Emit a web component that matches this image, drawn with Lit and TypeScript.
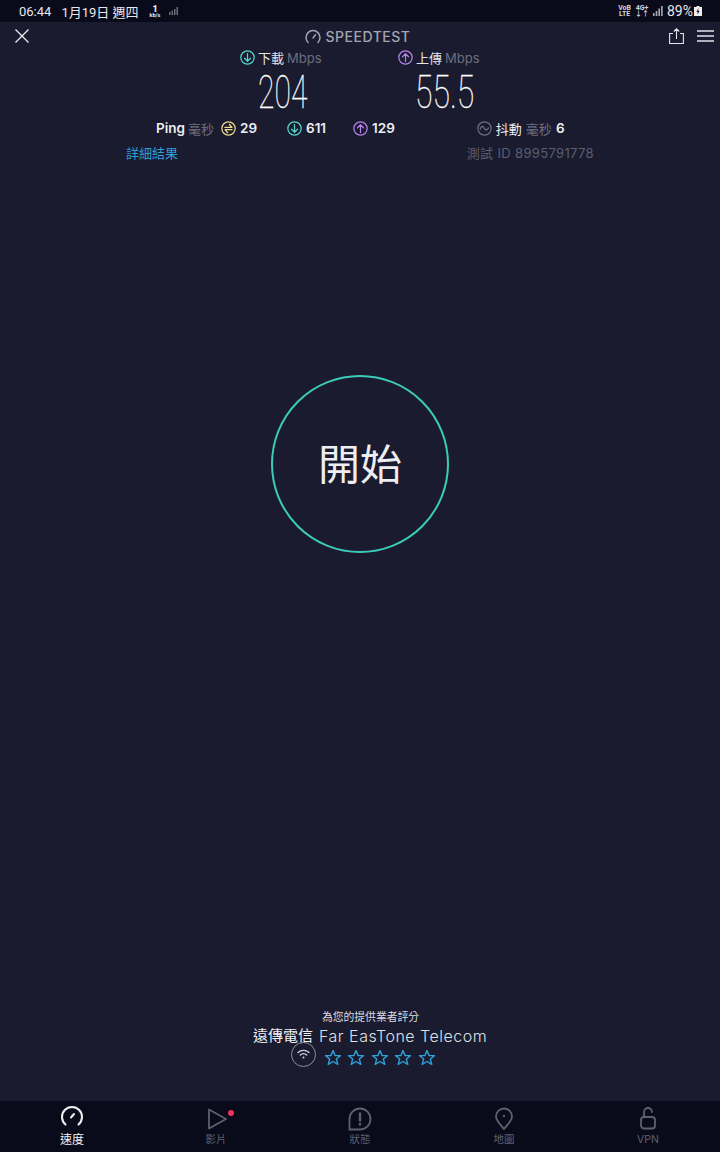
import { LitElement, html, css, svg } from "lit";
import { customElement } from "lit/decorators.js";

const circ = (color: string, inner: unknown, size = 15) => html`<svg class="ci" width=${size} height=${size} viewBox="0 0 16 16" fill="none" stroke=${color} stroke-width="1.3" stroke-linecap="round" stroke-linejoin="round"><circle cx="8" cy="8" r="7.1"/>${inner}</svg>`;
const down = svg`<path d="M8 3.8V12M4.8 8.800 8 12l3.200-3.200"/>`;
const up = svg`<path d="M8 12.200V4M4.800 7.200 8 4l3.200 3.200"/>`;
const ping = svg`<path stroke-width="1.500" d="M4.200 6.800h7.400L9 3.600M11.800 9.200H4.400L7 12.400"/>`;
const wave = svg`<path d="M3.400 8.600c1-2.800 2.600-3.400 3.600-2s2 3.600 3 3 1.600-1.200 2.400-2.200"/>`;

const star = html`<svg width="18" height="18" viewBox="0 0 18 18" fill="none" stroke="#2f9fd8" stroke-width="1.4" stroke-linejoin="round"><path d="M9 1.600l2.200 5h5.300l-4.200 3.400 1.500 5.400L9 12.500l-4.800 2.900 1.500-5.400L1.500 6.600h5.300z"/></svg>`;

@customElement("app-root")
export class AppRoot extends LitElement {
  static styles = css`
    :host { display: flex; flex-direction: column; width: 720px; height: 1152px; overflow: hidden; background: #1a1b2f; color: #fff; font-family: "Inter", "Noto Sans CJK TC", sans-serif; }
    .status { height: 22px; flex: none; background: #0a0b1a; display: flex; align-items: center; padding: 0 18px 0 19px; font-family: "Roboto", "Noto Sans CJK TC", sans-serif; font-size: 13px; color: #e8e8ec; }
    .date { margin-left: 10px; }
    .kb { margin-left: 11px; display: flex; flex-direction: column; align-items: center; font-size: 5.5px; line-height: 5px; font-weight: 700; }
    .kb b { font-size: 9px; line-height: 8px; }
    .sig { margin-left: 9px; }
    .grow { flex: 1; }
    .net { font-size: 7px; line-height: 6.5px; font-weight: 700; text-align: center; color: #d5d5da; margin-right: 4px; }
    .pct { font-size: 14px; margin: 0 1px 0 4px; }
    .head { height: 28px; flex: none; display: grid; grid-template-columns: 1fr auto 1fr; align-items: center; padding: 0 6px 0 15px; }
    .title { display: flex; align-items: center; gap: 5px; font-size: 14px; letter-spacing: 0.5px; color: #a4a5b0; font-weight: 500; padding-right: 14px; }
    .acts { justify-self: end; display: flex; align-items: center; gap: 13px; }
    .x { justify-self: start; display: block; }
    .metrics { display: flex; padding-left: 240px; height: 68px; flex: none; margin-top: -1px; }
    .metric { width: 158px; }
    .mh { display: flex; align-items: center; gap: 3px; height: 17px; font-size: 13px; color: #e4e4ea; }
    .dim { color: #6d6e80; }
    .num { font-family: "Roboto", sans-serif; font-weight: 100; font-size: 47px; line-height: 44px; height: 44px; margin-top: 4px; color: #fff; transform: scaleX(0.64); transform-origin: 0 50%; margin-left: 18px; white-space: nowrap; -webkit-text-stroke: 0.3px #fff; }
    .m2 .num { margin-left: 17px; transform: scaleX(0.68); }
    .row { display: flex; align-items: center; height: 20px; flex: none; font-size: 13.5px; font-weight: 600; color: #eeeef2; margin-top: 1px; }
    .row .ci { display: block; }
    .cell { display: flex; align-items: center; gap: 4px; }
    .cjk { font-weight: 400; font-size: 13px; }
    .p0 { margin-left: 156px; gap: 3px; }
    .p1 { margin-left: 7px; }
    .p2 { margin-left: 30px; }
    .p3 { margin-left: 27px; }
    .p4 { margin-left: 82px; }
    .links { display: flex; justify-content: space-between; padding: 0 126px; height: 20px; margin-top: 4px; font-size: 13px; align-items: center; flex: none; }
    .link { color: #2f9fd8; }
    .tid { color: #5c5d70; letter-spacing: 0.35px; }
    .stage { flex: 1; display: flex; flex-direction: column; align-items: center; min-height: 0; }
    .go { margin-top: 213px; width: 178px; height: 178px; box-sizing: border-box; border: 2px solid #3ccbb8; border-radius: 50%; padding-bottom: 6px; display: flex; align-items: center; justify-content: center; font-size: 42px; color: #eeeef2; font-family: "Noto Sans CJK TC", sans-serif; font-weight: 400; }
    .rate { margin-top: auto; padding-bottom: 34px; display: flex; flex-direction: column; align-items: flex-start; width: 235px; margin-left: 21px; position: relative; }
    .ask { font-size: 10.8px; align-self: center; color: #dcdce2; line-height: 16px; }
    .isp { font-size: 15px; line-height: 20px; white-space: nowrap; color: #dfe0e6; display: flex; gap: 6px; font-weight: 300; }
    .isp span:first-child { font-weight: 400; color: #f0f0f4; }
    .isp span:last-child { font-size: 16px; letter-spacing: 0.5px; }
    .stars { display: flex; gap: 5.4px; margin-left: 71px; margin-top: 3px; height: 18px; }
    .wifi { position: absolute; left: 38px; top: 32px; }
    .tabs { height: 51px; flex: none; background: #0a0b1a; display: grid; grid-template-columns: repeat(5, 1fr); }
    .tab { display: flex; flex-direction: column; align-items: center; padding-top: 4px; font-size: 10.5px; color: #5f606f; position: relative; }
    .tab.on { color: #f2f2f5; font-size: 12px; }
    .tab svg { display: block; height: 26px; }
    .tab span { line-height: 14px; margin-top: 2px; }
    .dot { position: absolute; left: 84px; top: 9px; width: 6px; height: 6px; border-radius: 50%; background: #f0325e; }
  `;

  render() {
    return html`
      <div class="status">
        <span>06:44</span><span class="date">1月19日 週四</span>
        <span class="kb"><b>1</b>kb/s</span>
        <svg class="sig" width="9" height="8" viewBox="0 0 9 8" fill="#6b6c78"><rect x="0" y="5" width="1.5" height="3"/><rect x="2.5" y="3.5" width="1.5" height="4.5"/><rect x="5" y="2" width="1.5" height="6"/><rect x="7.5" y="0" width="1.5" height="8"/></svg>
        <span class="grow"></span>
        <span class="net">VoB<br />LTE</span><span class="net">4G+<br />↓↑</span>
        <svg width="10" height="10" viewBox="0 0 10 10" fill="#a9a9b0"><rect x="0" y="7" width="1.6" height="3"/><rect x="2.700" y="5" width="1.6" height="5"/><rect x="5.400" y="2.500" width="1.6" height="7.500"/><rect x="8.100" y="0" width="1.6" height="10"/></svg>
        <span class="pct">89%</span>
        <svg width="8" height="10" viewBox="0 0 8 10"><path fill="#eee" d="M2.500 0h3v1H8v9H0V1h2.500z"/><path fill="#0a0b1a" d="M4.500 2 2.500 6h1.200L3.500 8.500 5.500 5H4.300z"/></svg>
      </div>

      <div class="head">
        <svg class="x" width="14" height="14" viewBox="0 0 14 14" stroke="#eee" stroke-width="1.3"><path d="M0.500 0.500l13 13M13.500 0.500l-13 13"/></svg>
        <div class="title">
          <svg width="16" height="15" viewBox="0 0 16 15" fill="none" stroke="#a4a5b0" stroke-width="1.5" stroke-linecap="round"><path d="M3 13.500A7 7 0 1 1 13 13.500M8 9l2.500-3.200"/></svg>
          SPEEDTEST
        </div>
        <div class="acts">
          <svg width="15" height="16" viewBox="0 0 15 16" fill="none" stroke="#e4e4ea" stroke-width="1.1"><path d="M4 5.500H.6v10h13.800v-10H11M7.500 11V1M4.800 3.500 7.500 .8l2.700 2.700"/></svg>
          <svg width="17" height="12" viewBox="0 0 17 12" stroke="#e4e4ea" stroke-width="1.5"><path d="M0 1h17M0 6h17M0 11h17"/></svg>
        </div>
      </div>

      <div class="metrics">
        <div class="metric">
          <div class="mh">${circ("#56d8d0", down)}<span>下載</span><span class="dim">Mbps</span></div>
          <div class="num">204</div>
        </div>
        <div class="metric m2">
          <div class="mh">${circ("#b682ec", up)}<span>上傳</span><span class="dim">Mbps</span></div>
          <div class="num">55.5</div>
        </div>
      </div>

      <div class="row">
        <div class="cell p0"><span>Ping</span><span class="dim cjk">毫秒</span></div>
        <div class="cell p1">${circ("#ecdc8a", ping)}<span>29</span></div>
        <div class="cell p2">${circ("#56d8d0", down)}<span>611</span></div>
        <div class="cell p3">${circ("#b682ec", up)}<span>129</span></div>
        <div class="cell p4">${circ("#6d6e80", wave)}<span class="cjk">抖動</span><span class="dim cjk">毫秒</span><span>6</span></div>
      </div>

      <div class="links"><span class="link">詳細結果</span><span class="tid">測試 ID 8995791778</span></div>

      <div class="stage">
        <div class="go">開始</div>
        <div class="rate">
          <div class="ask">為您的提供業者評分</div>
          <div class="isp"><span>遠傳電信</span><span>Far EasTone Telecom</span></div>
          <svg class="wifi" width="25" height="25" viewBox="0 0 25 25" fill="none" stroke="#8c8d9a" stroke-width="1"><circle cx="12.500" cy="12.500" r="12"/><path stroke="#d0d0d6" stroke-width="1.3" stroke-linecap="round" d="M7 10.500a8 8 0 0 1 11 0M9.300 13a4.500 4.500 0 0 1 6.400 0"/><circle cx="12.500" cy="15.500" r="1" fill="#d0d0d6" stroke="none"/></svg>
          <div class="stars">${star}${star}${star}${star}${star}</div>
        </div>
      </div>

      <div class="tabs">
        <div class="tab on">
          <svg width="24" height="26" viewBox="0 0 24 26" fill="none" stroke="#f2f2f5" stroke-width="2" stroke-linecap="round"><path d="M5.500 19.500a10 10 0 1 1 13 0M11 12.500l3-3.500"/></svg>
          <span>速度</span>
        </div>
        <div class="tab">
          <svg width="22" height="26" viewBox="0 0 22 26" fill="none" stroke="#5f606f" stroke-width="1.8" stroke-linejoin="round"><path d="M4 4.500v19L21 14z"/></svg>
          <span>影片</span><i class="dot"></i>
        </div>
        <div class="tab">
          <svg width="24" height="26" viewBox="0 0 24 26" fill="none" stroke="#5f606f" stroke-width="1.8"><path d="M12 3.500a10.500 10.500 0 1 1 0 21H1.500V14A10.500 10.500 0 0 1 12 3.500z"/><path stroke-width="2.4" stroke-linecap="round" d="M12 8.500v7M12 19v.5"/></svg>
          <span>狀態</span>
        </div>
        <div class="tab">
          <svg width="18" height="26" viewBox="0 0 18 26" fill="none" stroke="#5f606f" stroke-width="1.8" stroke-linejoin="round"><path d="M9 24C5 19 1 15.500 1 11.500a8 8 0 0 1 16 0C17 15.500 13 19 9 24z"/><circle cx="9" cy="11" r="1.2" fill="#5f606f" stroke="none"/></svg>
          <span>地圖</span>
        </div>
        <div class="tab">
          <svg width="18" height="26" viewBox="0 0 18 26" fill="none" stroke="#5f606f" stroke-width="1.8" stroke-linecap="round"><rect x="2" y="12" width="14" height="11.500" rx="3"/><path d="M5 12V7a4 4 0 0 1 8 0"/></svg>
          <span>VPN</span>
        </div>
      </div>
    `;
  }
}
